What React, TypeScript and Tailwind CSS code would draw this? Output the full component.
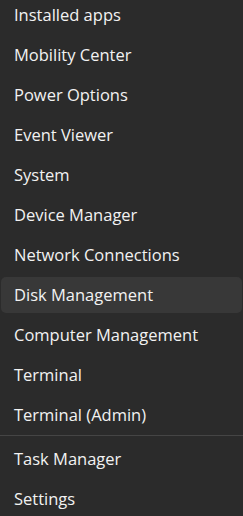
import React from "react";

const items = [
  "Installed apps",
  "Mobility Center",
  "Power Options",
  "Event Viewer",
  "System",
  "Device Manager",
  "Network Connections",
  "Disk Management",
  "Computer Management",
  "Terminal",
  "Terminal (Admin)",
];

const items2 = ["Task Manager", "Settings"];

function Item({ label, active }: { label: string; active?: boolean }) {
  return (
    <div className="h-10 flex items-center px-px">
      <div
        className={
          "h-9 w-full flex items-center pl-[13px] rounded-[5px] " +
          (active ? "bg-[#383838]" : "")
        }
      >
        <span className="text-[16.5px] text-[#f2f2f2] leading-none">{label}</span>
      </div>
    </div>
  );
}

export default function App() {
  return (
    <div
      className="w-[243px] h-[516px] overflow-hidden bg-[#2b2b2b]"
      style={{ fontFamily: '"Open Sans", "Noto Sans", sans-serif' }}
    >
      <div className="-mt-[5px] flex flex-col">
        {items.map((l) => (
          <Item key={l} label={l} active={l === "Disk Management"} />
        ))}
        <div className="h-px bg-[#454545] mb-[3px]" />
        {items2.map((l) => (
          <Item key={l} label={l} />
        ))}
      </div>
    </div>
  );
}
